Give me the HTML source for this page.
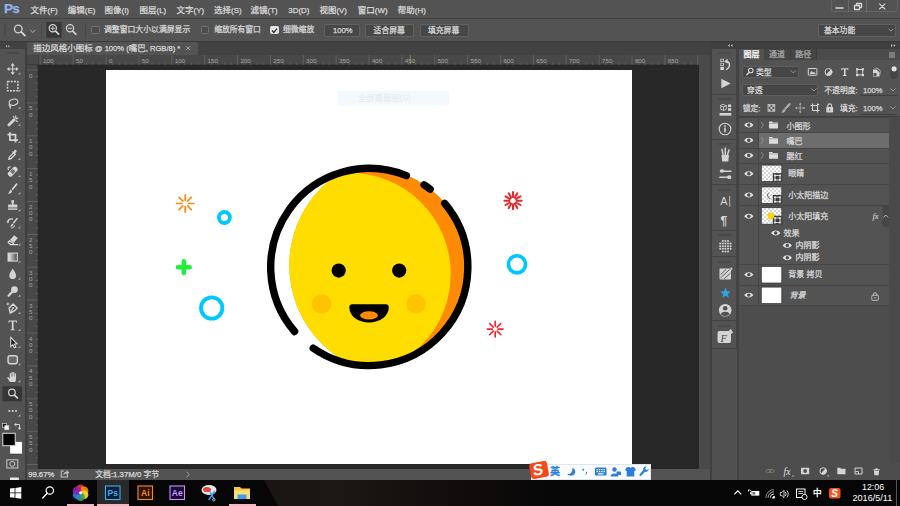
<!DOCTYPE html>
<html lang="zh-CN">
<head>
<meta charset="utf-8">
<title>描边风格小图标 @ 100% (嘴巴, RGB/8) *</title>
<style>
*{box-sizing:border-box;margin:0;padding:0}
html,body{width:900px;height:506px;overflow:hidden;background:#535353}
body{position:relative;font-family:"Liberation Sans","Noto Sans CJK SC",sans-serif;font-size:8px;color:#d9d9d9;line-height:1}
.abs{position:absolute}
.t{position:absolute;white-space:nowrap;line-height:12px;height:12px;font-size:8px;-webkit-text-stroke:0.250px currentColor}
.m{font-size:8.500px}
.l{font-size:.930em}
svg{position:absolute;overflow:visible}
.ic{fill:none;stroke:#d4d4d4;stroke-width:1.2;stroke-linecap:round;stroke-linejoin:round}
.icf{fill:#d4d4d4;stroke:none}
#menubar{left:0;top:0;width:900px;height:18px;background:#535353}
#menuline{left:0;top:18px;width:900px;height:1px;background:#404040}
#optbar{left:0;top:19px;width:900px;height:22px;background:#535353}
#optline{left:0;top:41px;width:900px;height:1px;background:#3a3a3a}
#tabbar{left:27px;top:42px;width:683px;height:13px;background:#424242}
#tab{left:27px;top:42px;width:171px;height:13px;background:#535353}
#tools{left:0;top:42px;width:26px;height:438px;background:#535353}
#toolsline{left:25px;top:42px;width:2px;height:438px;background:#3f3f3f}
#toolshead{left:0;top:42px;width:25px;height:7px;background:#424242}
#hruler{left:27px;top:55px;width:672.400px;height:10px;background:#484848}
#vruler{left:27px;top:65px;width:11px;height:403.800px;background:#484848}
#stage{left:38px;top:65px;width:661.400px;height:403.800px;background:#282828}
#doc{left:106px;top:70px;width:526px;height:394px;background:#fff}
#vscroll{left:699.400px;top:55px;width:10.600px;height:413.800px;background:#4a4a4a}
#status{left:27px;top:468.800px;width:683px;height:11.200px;background:#535353}
#rdiv{left:710px;top:42px;width:2px;height:438px;background:#404040}
#rhead{left:712px;top:42px;width:188px;height:7px;background:#3f3f3f}
#strip{left:712px;top:49px;width:24.300px;height:431px;background:#535353}
#stripline{left:736.300px;top:49px;width:2.450px;height:431px;background:#424242}
#panel{left:738.750px;top:49px;width:161.250px;height:431px;background:#4d4d4d}
#taskbar{left:0;top:480px;width:900px;height:26px;background:#060606}
.btn{position:absolute;background:#474747;border:1px solid #616161;border-radius:1px}
.cb{position:absolute;width:8.800px;height:8.800px;border:1px solid #727272;border-radius:1.500px;background:#4c4c4c}
.row{position:absolute;left:739px;width:150px;background:#535353;border-top:1px solid #454545}
.eyecol{position:absolute;left:758px;width:1px;background:#454545}
.thumb{position:absolute;left:761px;width:21px;height:17px;background:#fff;border:1px solid #3a3a3a}
.grip{position:absolute;left:718.200px;width:12.800px;height:2px;background:#494949}
.sep{position:absolute;left:712px;width:24.300px;height:1px;background:#424242}
</style>
</head>
<body>
<div id="menubar" class="abs"></div>
<div id="menuline" class="abs"></div>
<div id="optbar" class="abs"></div>
<div id="optline" class="abs"></div>
<div id="tabbar" class="abs"></div>
<div id="tab" class="abs"></div>
<div id="tools" class="abs"></div>
<div id="toolshead" class="abs"></div>
<div id="toolsline" class="abs"></div>
<div id="hruler" class="abs"></div>
<div id="vruler" class="abs"></div>
<div id="stage" class="abs"></div>
<div id="doc" class="abs"></div>
<svg id="art" class="abs" style="left:106px;top:70px" width="526" height="394" viewBox="106 70 526 394">
<defs>
<clipPath id="c0"><circle cx="369.3" cy="267" r="99.300"/></clipPath>
<clipPath id="c1"><circle cx="399.700" cy="265.500" r="110.400"/></clipPath>
</defs>
<rect x="337.300" y="91" width="111.600" height="14.500" fill="#f4f9fd"/>
<text x="358" y="101.200" font-size="8.300" fill="#e6e9eb" font-family="Liberation Sans, Noto Sans CJK SC, sans-serif">全屏幕截图(S)</text>
<g clip-path="url(#c0)"><g clip-path="url(#c1)">
<circle cx="369.3" cy="267" r="99.300" fill="#ff8a05"/>
<circle cx="349.600" cy="274" r="101.200" fill="#ffdd00"/>
</g></g>
<g fill="none" stroke="#000" stroke-width="7.400" stroke-linecap="round">
<path d="M294.6 331.5A98.7 98.7 0 0 1 406.4 175.6"/>
<path d="M424.1 184.9A98.7 98.7 0 0 1 430.1 189.2"/>
<path d="M444.7 203.3A98.7 98.7 0 0 1 313.3 348.2"/>
</g>
<circle cx="338.7" cy="270.6" r="7.100" fill="#000"/>
<circle cx="399.2" cy="270.6" r="7.100" fill="#000"/>
<circle cx="321.6" cy="303.9" r="9.800" fill="#ffc400"/>
<circle cx="416.1" cy="303.9" r="9.800" fill="#ffc400"/>
<path d="M352.300 304.200H385.800A3 3 0 0 1 388.800 307.200C388.800 316 380 322.400 369 322.400C358 322.400 349.300 316 349.300 307.200A3 3 0 0 1 352.300 304.200Z" fill="#000"/>
<ellipse cx="369" cy="315.400" rx="8.900" ry="4.100" fill="#ff8a05"/>
<path d="M188.4 203.5L193.8 203.5M187.5 205.8L191.3 209.6M185.2 206.7L185.2 212.1M182.9 205.8L179.1 209.6M182.0 203.5L176.6 203.5M182.9 201.2L179.1 197.4M185.2 200.3L185.2 194.9M187.5 201.2L191.3 197.4" stroke="#ff8a10" stroke-width="1.700" stroke-linecap="round" fill="none"/>
<circle cx="224.4" cy="217.5" r="5.500" fill="none" stroke="#00c8ff" stroke-width="3.800"/>
<path d="M177.900 267.200H189.700M183.800 261.300V273.100" stroke="#1ef03c" stroke-width="4.500" stroke-linecap="round" fill="none"/>
<circle cx="211.7" cy="308" r="10.650" fill="none" stroke="#00c8ff" stroke-width="3.900"/>
<path d="M516.6 200.7L521.6 200.7M516.1 202.5L520.4 205.0M514.8 203.8L517.3 208.1M513.0 204.3L513.0 209.3M511.2 203.8L508.7 208.1M509.9 202.5L505.6 205.0M509.4 200.7L504.4 200.7M509.900 198.900L505.6 196.4M511.2 197.6L508.7 193.3M513.0 197.1L513.0 192.1M514.8 197.6L517.3 193.3M516.1 198.900L520.4 196.4" stroke="#e8262a" stroke-width="2" stroke-linecap="round" fill="none"/>
<circle cx="517" cy="264.3" r="8.550" fill="none" stroke="#00c8ff" stroke-width="3.700"/>
<path d="M498.0 329.1L503.1 329.1M497.2 331.1L500.8 334.7M495.2 331.900L495.2 337.0M493.2 331.1L489.6 334.7M492.4 329.1L487.3 329.1M493.2 327.1L489.6 323.5M495.2 326.3L495.2 321.2M497.2 327.1L500.8 323.5" stroke="#ff1e28" stroke-width="1.600" stroke-linecap="round" fill="none"/>
</svg>

<div id="vscroll" class="abs"></div>
<div id="status" class="abs"></div>
<div id="rdiv" class="abs"></div>
<div id="rhead" class="abs"></div>
<div id="strip" class="abs"></div>
<div id="stripline" class="abs"></div>
<div id="panel" class="abs"></div>
<div id="taskbar" class="abs"></div>
<div class="t" style="left:4px;top:0px;height:18px;line-height:17px;font-size:13.500px;font-weight:bold;color:#8fb6e6;letter-spacing:-0.800px">Ps</div>
<div class="t m" style="left:30.6px;top:3.6999999999999993px;">文件<span class="l">(F)</span></div>
<div class="t m" style="left:67.8px;top:3.6999999999999993px;">编辑<span class="l">(E)</span></div>
<div class="t m" style="left:104.5px;top:3.6999999999999993px;">图像<span class="l">(I)</span></div>
<div class="t m" style="left:139.5px;top:3.6999999999999993px;">图层<span class="l">(L)</span></div>
<div class="t m" style="left:176.5px;top:3.6999999999999993px;">文字<span class="l">(Y)</span></div>
<div class="t m" style="left:214px;top:3.6999999999999993px;">选择<span class="l">(S)</span></div>
<div class="t m" style="left:250.6px;top:3.6999999999999993px;">滤镜<span class="l">(T)</span></div>
<div class="t m" style="left:288.3px;top:3.6999999999999993px;"><span class="l">3D(D)</span></div>
<div class="t m" style="left:319.4px;top:3.6999999999999993px;">视图<span class="l">(V)</span></div>
<div class="t m" style="left:357.8px;top:3.6999999999999993px;">窗口<span class="l">(W)</span></div>
<div class="t m" style="left:397.8px;top:3.6999999999999993px;">帮助<span class="l">(H)</span></div>
<div class="abs" style="left:831px;top:-1px;width:67px;height:13px;border:1px solid #646464;border-radius:0 0 2px 2px"></div>
<div class="abs" style="left:848px;top:0;width:1px;height:12px;background:#6a6a6a"></div>
<div class="abs" style="left:866px;top:0;width:1px;height:12px;background:#6a6a6a"></div>
<svg style="left:831px;top:0" width="67" height="12" viewBox="831 0 67 12"><g class="ic" style="stroke-width:1.3"><path d="M836 8H843" stroke-width="1.6"/><path d="M854.500 5.500H859.500V9.500H854.500ZM856.500 5.300V3.500H861.500V7.500H859.700"/><path d="M879.500 3.800L885 9M885 3.800L879.500 9" stroke-width="1.100"/></g></svg>
<svg style="left:0;top:19px" width="90" height="22" viewBox="0 19 90 22"><g class="ic" style="stroke-width:1.300"><circle cx="18.300" cy="29" r="3.800"/><path d="M21.200 31.900L24.800 35.500" stroke-width="1.800"/><path d="M30.500 30.200L32.800 32.400L35.100 30.200" stroke="#b0b0b0" stroke-width="1"/></g><rect x="46.300" y="22" width="15.400" height="15.700" fill="#383838"/><g class="ic" style="stroke-width:1.200"><circle cx="52.800" cy="28.300" r="3.600"/><path d="M55.600 31.100L58.600 34.100" stroke-width="1.700"/><path d="M51 28.300H54.600M52.800 26.500V30.100" stroke-width="0.900"/><circle cx="70" cy="28.300" r="3.600"/><path d="M72.800 31.100L75.800 34.100" stroke-width="1.700"/><path d="M68.200 28.300H71.800" stroke-width="0.900"/></g><path d="M5 23V38M41.500 23V38M85.500 23V38" stroke="#474747" stroke-width="1"/></svg>
<div class="cb" style="left:90.800px;top:25.600px"></div>
<div class="t" style="left:104px;top:24.2px;font-size:7.850px">调整窗口大小以满屏显示</div>
<div class="cb" style="left:200.600px;top:25.600px"></div>
<div class="t" style="left:214.2px;top:24.2px;font-size:7.750px">缩放所有窗口</div>
<div class="cb" style="left:270px;top:25.500px;background:#e4e4e4;border-color:#e4e4e4"></div>
<svg style="left:270px;top:25.500px" width="9" height="9" viewBox="0 0 9 9"><path d="M2 4.500L3.800 6.400L7 2.600" fill="none" stroke="#333" stroke-width="1.400"/></svg>
<div class="t" style="left:283px;top:24.2px;font-size:7.800px">细微缩放</div>
<div class="btn" style="left:324px;top:24px;width:36px;height:12.500px"></div>
<div class="t" style="left:333px;top:25px;font-size:7.600px">100%</div>
<div class="btn" style="left:365px;top:24px;width:49px;height:12.500px"></div>
<div class="t" style="left:373.6px;top:25px;font-size:7.800px">适合屏幕</div>
<div class="btn" style="left:419.500px;top:24px;width:49px;height:12.500px"></div>
<div class="t" style="left:428px;top:25px;font-size:7.800px">填充屏幕</div>
<div class="btn" style="left:818px;top:23.500px;width:77.500px;height:13px"></div>
<div class="t" style="left:824px;top:25px;font-size:7.800px">基本功能</div>
<svg style="left:886px;top:26px" width="10" height="8" viewBox="0 0 10 8"><path d="M3 3.200L5 5.200L7 3.200" class="ic" style="stroke-width:0.800;stroke:#a8a8a8"/></svg>
<div class="t m" style="left:33.2px;top:42.2px;">描边风格小图标<span style="font-size:.895em"> @ 100% (</span>嘴巴<span style="font-size:.895em">, RGB/8) *</span></div>
<svg style="left:185px;top:45px" width="6" height="6" viewBox="0 0 6 6"><path d="M1.600 1.600L4.800 4.800M4.800 1.600L1.600 4.800" class="ic" style="stroke-width:0.800;stroke:#bcbcbc"/></svg>
<svg style="left:5px;top:43.500px" width="8" height="5" viewBox="0 0 8 5"><path d="M1 1L2.400 2.300L1 3.600ZM3.300 1L4.700 2.300L3.300 3.600Z" fill="#c4c4c4"/></svg>
<div class="abs" style="left:7px;top:51.500px;width:12px;height:2px;background:#464646"></div>
<svg style="left:27px;top:54px" width="673" height="11" viewBox="27 54 673 11"><path d="M38.500 55V65" stroke="#3e3e3e" stroke-width="1"/><path d="M27 64.500H699" stroke="#3a3a3a" stroke-width="1"/><path d="M410.300 55V64" stroke="#9c8f3c" stroke-width="0.800"/><path d="M40.2 55V65M46.8 62.500V65M53.4 62.500V65M60.0 62.500V65M66.6 62.500V65M73.1 55V65M79.7 62.500V65M86.3 62.500V65M92.8 62.500V65M99.4 62.500V65M106.0 55V65M112.6 62.500V65M119.2 62.500V65M125.7 62.500V65M132.3 62.500V65M138.9 55V65M145.4 62.500V65M152.0 62.500V65M158.6 62.500V65M165.2 62.500V65M171.8 55V65M178.3 62.500V65M184.9 62.500V65M191.5 62.500V65M198.1 62.500V65M204.6 55V65M211.2 62.500V65M217.8 62.500V65M224.3 62.500V65M230.9 62.500V65M237.5 55V65M244.1 62.500V65M250.7 62.500V65M257.2 62.500V65M263.8 62.500V65M270.4 55V65M276.9 62.500V65M283.5 62.500V65M290.1 62.500V65M296.7 62.500V65M303.2 55V65M309.8 62.500V65M316.4 62.500V65M323.0 62.500V65M329.5 62.500V65M336.1 55V65M342.7 62.500V65M349.3 62.500V65M355.9 62.500V65M362.4 62.500V65M369.0 55V65M375.6 62.500V65M382.1 62.500V65M388.7 62.500V65M395.3 62.500V65M401.9 55V65M408.4 62.500V65M415.0 62.500V65M421.6 62.500V65M428.2 62.500V65M434.8 55V65M441.3 62.500V65M447.9 62.500V65M454.5 62.500V65M461.1 62.500V65M467.6 55V65M474.2 62.500V65M480.8 62.500V65M487.3 62.500V65M493.9 62.500V65M500.5 55V65M507.1 62.500V65M513.6 62.500V65M520.2 62.500V65M526.8 62.500V65M533.4 55V65M540.0 62.500V65M546.5 62.500V65M553.1 62.500V65M559.7 62.500V65M566.2 55V65M572.8 62.500V65M579.4 62.500V65M586.0 62.500V65M592.5 62.500V65M599.1 55V65M605.7 62.500V65M612.3 62.500V65M618.9 62.500V65M625.4 62.500V65M632.0 55V65M638.6 62.500V65M645.1 62.500V65M651.7 62.500V65M658.3 62.500V65M664.9 55V65M671.4 62.500V65M678.0 62.500V65M684.6 62.500V65M691.2 62.500V65M697.8 55V65" stroke="#6c6c6c" stroke-width="0.700"/><text x="43.1" y="63" font-size="6.200" fill="#a6a6a6" font-family="Liberation Sans, sans-serif">100</text><text x="76.0" y="63" font-size="6.200" fill="#a6a6a6" font-family="Liberation Sans, sans-serif">50</text><text x="108.9" y="63" font-size="6.200" fill="#a6a6a6" font-family="Liberation Sans, sans-serif">0</text><text x="141.8" y="63" font-size="6.200" fill="#a6a6a6" font-family="Liberation Sans, sans-serif">50</text><text x="174.7" y="63" font-size="6.200" fill="#a6a6a6" font-family="Liberation Sans, sans-serif">100</text><text x="207.5" y="63" font-size="6.200" fill="#a6a6a6" font-family="Liberation Sans, sans-serif">150</text><text x="240.4" y="63" font-size="6.200" fill="#a6a6a6" font-family="Liberation Sans, sans-serif">200</text><text x="273.3" y="63" font-size="6.200" fill="#a6a6a6" font-family="Liberation Sans, sans-serif">250</text><text x="306.1" y="63" font-size="6.200" fill="#a6a6a6" font-family="Liberation Sans, sans-serif">300</text><text x="339.0" y="63" font-size="6.200" fill="#a6a6a6" font-family="Liberation Sans, sans-serif">350</text><text x="371.9" y="63" font-size="6.200" fill="#a6a6a6" font-family="Liberation Sans, sans-serif">400</text><text x="404.8" y="63" font-size="6.200" fill="#a6a6a6" font-family="Liberation Sans, sans-serif">450</text><text x="437.6" y="63" font-size="6.200" fill="#a6a6a6" font-family="Liberation Sans, sans-serif">500</text><text x="470.5" y="63" font-size="6.200" fill="#a6a6a6" font-family="Liberation Sans, sans-serif">550</text><text x="503.4" y="63" font-size="6.200" fill="#a6a6a6" font-family="Liberation Sans, sans-serif">600</text><text x="536.3" y="63" font-size="6.200" fill="#a6a6a6" font-family="Liberation Sans, sans-serif">650</text><text x="569.1" y="63" font-size="6.200" fill="#a6a6a6" font-family="Liberation Sans, sans-serif">700</text><text x="602.0" y="63" font-size="6.200" fill="#a6a6a6" font-family="Liberation Sans, sans-serif">750</text><text x="634.9" y="63" font-size="6.200" fill="#a6a6a6" font-family="Liberation Sans, sans-serif">800</text><text x="667.8" y="63" font-size="6.200" fill="#a6a6a6" font-family="Liberation Sans, sans-serif">850</text></svg>
<svg style="left:27px;top:65px" width="11" height="403" viewBox="27 65 11 403"><path d="M37.500 65V468" stroke="#3a3a3a" stroke-width="1"/><path d="M27 70.0H38M35.500 76.6H38M35.500 83.2H38M35.500 89.7H38M35.500 96.3H38M27 102.9H38M35.500 109.4H38M35.500 116.0H38M35.500 122.6H38M35.500 129.2H38M27 135.8H38M35.500 142.3H38M35.500 148.9H38M35.500 155.5H38M35.500 162.1H38M27 168.6H38M35.500 175.2H38M35.500 181.8H38M35.500 188.3H38M35.500 194.9H38M27 201.5H38M35.500 208.1H38M35.500 214.7H38M35.500 221.2H38M35.500 227.8H38M27 234.4H38M35.500 240.9H38M35.500 247.5H38M35.500 254.1H38M35.500 260.7H38M27 267.2H38M35.500 273.8H38M35.500 280.4H38M35.500 287.0H38M35.500 293.5H38M27 300.1H38M35.500 306.7H38M35.500 313.3H38M35.500 319.9H38M35.500 326.4H38M27 333.0H38M35.500 339.6H38M35.500 346.1H38M35.500 352.7H38M35.500 359.3H38M27 365.9H38M35.500 372.4H38M35.500 379.0H38M35.500 385.6H38M35.500 392.2H38M27 398.8H38M35.500 405.3H38M35.500 411.9H38M35.500 418.5H38M35.500 425.1H38M27 431.6H38M35.500 438.2H38M35.500 444.8H38M35.500 451.3H38M35.500 457.9H38M27 464.5H38" stroke="#6c6c6c" stroke-width="0.700"/><text x="29" y="77.5" font-size="6.200" fill="#a6a6a6" font-family="Liberation Sans, sans-serif">0</text><text x="29" y="110.4" font-size="6.200" fill="#a6a6a6" font-family="Liberation Sans, sans-serif">5</text><text x="29" y="116.6" font-size="6.200" fill="#a6a6a6" font-family="Liberation Sans, sans-serif">0</text><text x="29" y="143.2" font-size="6.200" fill="#a6a6a6" font-family="Liberation Sans, sans-serif">1</text><text x="29" y="149.4" font-size="6.200" fill="#a6a6a6" font-family="Liberation Sans, sans-serif">0</text><text x="29" y="155.7" font-size="6.200" fill="#a6a6a6" font-family="Liberation Sans, sans-serif">0</text><text x="29" y="176.1" font-size="6.200" fill="#a6a6a6" font-family="Liberation Sans, sans-serif">1</text><text x="29" y="182.3" font-size="6.200" fill="#a6a6a6" font-family="Liberation Sans, sans-serif">5</text><text x="29" y="188.5" font-size="6.200" fill="#a6a6a6" font-family="Liberation Sans, sans-serif">0</text><text x="29" y="209.0" font-size="6.200" fill="#a6a6a6" font-family="Liberation Sans, sans-serif">2</text><text x="29" y="215.2" font-size="6.200" fill="#a6a6a6" font-family="Liberation Sans, sans-serif">0</text><text x="29" y="221.4" font-size="6.200" fill="#a6a6a6" font-family="Liberation Sans, sans-serif">0</text><text x="29" y="241.9" font-size="6.200" fill="#a6a6a6" font-family="Liberation Sans, sans-serif">2</text><text x="29" y="248.1" font-size="6.200" fill="#a6a6a6" font-family="Liberation Sans, sans-serif">5</text><text x="29" y="254.3" font-size="6.200" fill="#a6a6a6" font-family="Liberation Sans, sans-serif">0</text><text x="29" y="274.8" font-size="6.200" fill="#a6a6a6" font-family="Liberation Sans, sans-serif">3</text><text x="29" y="280.9" font-size="6.200" fill="#a6a6a6" font-family="Liberation Sans, sans-serif">0</text><text x="29" y="287.1" font-size="6.200" fill="#a6a6a6" font-family="Liberation Sans, sans-serif">0</text><text x="29" y="307.6" font-size="6.200" fill="#a6a6a6" font-family="Liberation Sans, sans-serif">3</text><text x="29" y="313.8" font-size="6.200" fill="#a6a6a6" font-family="Liberation Sans, sans-serif">5</text><text x="29" y="320.0" font-size="6.200" fill="#a6a6a6" font-family="Liberation Sans, sans-serif">0</text><text x="29" y="340.5" font-size="6.200" fill="#a6a6a6" font-family="Liberation Sans, sans-serif">4</text><text x="29" y="346.7" font-size="6.200" fill="#a6a6a6" font-family="Liberation Sans, sans-serif">0</text><text x="29" y="352.9" font-size="6.200" fill="#a6a6a6" font-family="Liberation Sans, sans-serif">0</text><text x="29" y="373.4" font-size="6.200" fill="#a6a6a6" font-family="Liberation Sans, sans-serif">4</text><text x="29" y="379.6" font-size="6.200" fill="#a6a6a6" font-family="Liberation Sans, sans-serif">5</text><text x="29" y="385.8" font-size="6.200" fill="#a6a6a6" font-family="Liberation Sans, sans-serif">0</text><text x="29" y="406.2" font-size="6.200" fill="#a6a6a6" font-family="Liberation Sans, sans-serif">5</text><text x="29" y="412.4" font-size="6.200" fill="#a6a6a6" font-family="Liberation Sans, sans-serif">0</text><text x="29" y="418.6" font-size="6.200" fill="#a6a6a6" font-family="Liberation Sans, sans-serif">0</text><text x="29" y="439.1" font-size="6.200" fill="#a6a6a6" font-family="Liberation Sans, sans-serif">5</text><text x="29" y="445.3" font-size="6.200" fill="#a6a6a6" font-family="Liberation Sans, sans-serif">5</text><text x="29" y="451.5" font-size="6.200" fill="#a6a6a6" font-family="Liberation Sans, sans-serif">0</text></svg>
<div class="t" style="left:28.2px;top:469.3px;font-size:7.700px">99.67%</div>
<svg style="left:60px;top:469.200px" width="10" height="9" viewBox="0 0 10 9"><path d="M3.500 2H1.200V8H7.500V6" class="ic" style="stroke-width:1.100;stroke:#c4c4c4"/><path d="M3.300 6C3.600 3.800 5 2.800 6.500 2.800V1L9.300 3.600L6.500 6.200V4.400C5.200 4.400 4.200 4.900 3.300 6Z" fill="#c4c4c4"/></svg>
<div class="t" style="left:95.3px;top:469.3px;font-size:7.800px">文档:1.37M/0 字节</div>
<svg style="left:185px;top:470.800px" width="6" height="7" viewBox="0 0 6 7"><path d="M1.800 1L4.200 3.500L1.800 6" class="ic" style="stroke-width:0.900;stroke:#a8a8a8"/></svg>
<svg style="left:0;top:42px" width="26" height="438" viewBox="0 42 26 438">
<rect x="2.500" y="386.300" width="19.500" height="15" fill="#363636"/>
<g transform="translate(12.700 69.0) scale(0.800) translate(-12 0)"><path class="ic" d="M12 -4.500V4.500M7.500 0H16.500" style="stroke-width:1.350"/><path class="icf" d="M12 -7.400L14.600 -4H9.400ZM12 7.400L14.600 4H9.400ZM4.600 0L8 -2.600V2.600ZM19.400 0L16 -2.600V2.600Z"/></g><path d="M20.300 74.5V72.3L18.100 74.5Z" fill="#b4b4b4"/>
<g transform="translate(12.700 86.1) scale(0.800) translate(-12 0)"><rect class="ic" x="5.500" y="-5.800" width="13" height="11.600" style="stroke-width:1.800;stroke-dasharray:2.600 1.400;stroke-linecap:butt"/></g><path d="M20.300 91.6V89.4L18.100 91.6Z" fill="#b4b4b4"/>
<g transform="translate(12.700 103.2) scale(0.800) translate(-12 0)"><ellipse class="ic" cx="13" cy="-1.200" rx="5.600" ry="3.800" transform="rotate(-12 13 -1.200)"/><path class="ic" d="M8.300 1.200C7 2.400 7.600 4 9.300 3.600C8.600 4.800 8.600 5.600 9 6.300" style="stroke-width:1.500"/></g><path d="M20.300 108.7V106.5L18.100 108.7Z" fill="#b4b4b4"/>
<g transform="translate(12.700 120.3) scale(0.800) translate(-12 0)"><path class="ic" d="M7.200 5.800L13.800 -0.800" style="stroke-width:3.450"/><path class="ic" d="M15.800 -5.500V-3M18.300 -2.800L16.800 -1.800M17.800 1.500L16.200 0.500M12.800 -4.800L13.800 -3.200" style="stroke-width:1.500"/></g><path d="M20.300 125.8V123.6L18.100 125.8Z" fill="#b4b4b4"/>
<g transform="translate(12.700 137.4) scale(0.800) translate(-12 0)"><path class="ic" d="M8.500 -6.500V3.500H18.500M5.500 -3.500H15.500V6.500" style="stroke-width:2.250;stroke-linecap:butt"/></g><path d="M20.300 142.9V140.7L18.100 142.9Z" fill="#b4b4b4"/>
<g transform="translate(12.700 154.5) scale(0.800) translate(-12 0)"><path class="ic" d="M7 6L8 3L13 -2L15 0L10 5Z" style="stroke-width:1.650"/><path class="icf" d="M12.600 -3.200L14.400 -5.600C15.400 -6.800 17.800 -4.800 16.800 -3.400L15 -1.200L16 -0.200L15 0.800L11.200 -3L12.200 -4Z"/></g><path d="M20.300 160.0V157.8L18.100 160.0Z" fill="#b4b4b4"/>
<g transform="translate(12.700 171.6) scale(0.800) translate(-12 0)"><g transform="rotate(-45 12 0)"><rect class="icf" x="5" y="-3.200" width="14" height="6.400" rx="2.200"/><rect x="9.800" y="-2.200" width="4.400" height="4.400" fill="#535353"/><circle class="icf" cx="11" cy="-1" r="0.500"/><circle class="icf" cx="13" cy="-1" r="0.500"/><circle class="icf" cx="11" cy="1" r="0.500"/><circle class="icf" cx="13" cy="1" r="0.500"/></g><path class="ic" d="M6.500 -2.500C5.500 -5 7.500 -6.500 9.500 -5.500" style="stroke-width:1.500;stroke-dasharray:1 1"/></g><path d="M20.300 177.1V174.9L18.100 177.1Z" fill="#b4b4b4"/>
<g transform="translate(12.700 188.7) scale(0.800) translate(-12 0)"><path class="icf" d="M17.300 -6.800C18.300 -6.200 18 -5.200 17.400 -4.500L12 2L10.300 0.600L15.800 -6.200C16.300 -6.800 16.800 -7.100 17.300 -6.800Z"/><path class="icf" d="M9.600 1.400L11.300 2.900C11 5.200 8.600 6.800 6.200 6.200C7.800 5.200 7.600 2.400 9.600 1.400Z"/></g><path d="M20.300 194.2V192.0L18.100 194.2Z" fill="#b4b4b4"/>
<g transform="translate(12.700 205.8) scale(0.800) translate(-12 0)"><path class="icf" d="M10.200 -6C10.200 -7.800 13.800 -7.800 13.800 -6C13.800 -4.500 13 -3.500 13 -1.500H16.500C17.600 -1.500 17.800 -0.800 17.800 0V2H6.200V0C6.200 -0.800 6.400 -1.500 7.500 -1.500H11C11 -3.500 10.200 -4.500 10.200 -6Z"/><rect class="icf" x="6.200" y="3.200" width="11.600" height="1.800"/></g><path d="M20.300 211.3V209.1L18.100 211.3Z" fill="#b4b4b4"/>
<g transform="translate(12.700 222.9) scale(0.800) translate(-12 0)"><path class="icf" d="M17.800 -6.500C18.600 -6 18.400 -5.200 17.900 -4.500L13.500 1L12.100 -0.100L16.600 -5.900C17 -6.400 17.400 -6.700 17.800 -6.500Z"/><path class="icf" d="M11.500 0.600L12.900 1.800C12.700 3.800 10.700 5 8.700 4.600C10 3.700 9.900 1.400 11.500 0.600Z"/><path class="ic" d="M6 -1C6 -4.200 9 -5.800 11.600 -4.600" style="stroke-width:1.650"/><path class="icf" d="M4.300 -2L7.700 -2L6 0.600Z"/><path class="ic" d="M14.500 3.500C14 5.200 12.500 6.300 10.500 6.300" style="stroke-width:1.500;stroke:#aaa"/></g><path d="M20.300 228.4V226.2L18.100 228.4Z" fill="#b4b4b4"/>
<g transform="translate(12.700 240.0) scale(0.800) translate(-12 0)"><path class="icf" d="M13.800 -6L18.400 -2.400L13.400 3.500L8.600 0Z"/><path class="ic" d="M8 0.800L6.200 3L9.600 5.600H12.400L13 4.300Z" style="stroke-width:1.500"/><path class="ic" d="M9 5.800H18" style="stroke-width:1.500"/></g><path d="M20.300 245.5V243.3L18.100 245.5Z" fill="#b4b4b4"/>
<g transform="translate(12.700 257.1) scale(0.800) translate(-12 0)"><defs><linearGradient id="gr" x1="0" x2="1"><stop offset="0" stop-color="#eee"/><stop offset="1" stop-color="#4a4a4a"/></linearGradient></defs><rect x="6.200" y="-5" width="11.600" height="10" fill="url(#gr)" stroke="#d4d4d4" stroke-width="1.350"/></g><path d="M20.300 262.6V260.4L18.100 262.6Z" fill="#b4b4b4"/>
<g transform="translate(12.700 274.2) scale(0.800) translate(-12 0)"><path class="icf" d="M12 -7C13.500 -3.800 16.300 -1.200 16.300 1.800C16.300 4.400 14.400 6 12 6C9.600 6 7.700 4.400 7.700 1.800C7.700 -1.200 10.500 -3.800 12 -7Z"/></g><path d="M20.300 279.7V277.5L18.100 279.7Z" fill="#b4b4b4"/>
<g transform="translate(12.700 291.3) scale(0.800) translate(-12 0)"><circle class="icf" cx="14.200" cy="-2.200" r="4.200"/><path class="ic" d="M11.200 0.800L6.800 5.600" style="stroke-width:2.700"/></g><path d="M20.300 296.8V294.6L18.100 296.8Z" fill="#b4b4b4"/>
<g transform="translate(12.700 308.4) scale(0.800) translate(-12 0)"><path class="ic" d="M9 6L7.500 -0.500L12.500 -5.500L17.500 -0.500L15 2.500Z" style="stroke-width:1.800"/><path class="ic" d="M9.200 5.600L12.200 -0.200" style="stroke-width:1.350"/><circle class="icf" cx="12.400" cy="-0.600" r="1.100"/><path class="ic" d="M6 -6.800V-4.200M4.700 -5.500H7.300" style="stroke-width:1.200"/></g><path d="M20.300 313.9V311.7L18.100 313.9Z" fill="#b4b4b4"/>
<g transform="translate(12.700 325.5) scale(0.800) translate(-12 0)"><path class="icf" d="M6.800 -6.200H17.200V-3.400H16.300C16.100 -4.500 15.700 -4.900 14.600 -4.900H13.100V3.800C13.100 4.700 13.400 4.900 14.600 5V5.800H9.400V5C10.600 4.900 10.900 4.700 10.900 3.800V-4.900H9.400C8.300 -4.900 7.900 -4.500 7.700 -3.400H6.800Z"/></g><path d="M20.300 331.0V328.8L18.100 331.0Z" fill="#b4b4b4"/>
<g transform="translate(12.700 342.6) scale(0.800) translate(-12 0)"><path d="M9.500 -6.500L9.500 5L12.200 2.600L14 6.600L16 5.700L14.200 1.800L17.500 1.500Z" fill="#222" stroke="#d4d4d4" stroke-width="1.350"/></g><path d="M20.300 348.1V345.9L18.100 348.1Z" fill="#b4b4b4"/>
<g transform="translate(12.700 359.7) scale(0.800) translate(-12 0)"><rect x="6.200" y="-5" width="11.600" height="10" rx="2.600" fill="#6a6a6a" stroke="#d4d4d4" stroke-width="1.800"/></g><path d="M20.300 365.2V363.0L18.100 365.2Z" fill="#b4b4b4"/>
<g transform="translate(12.700 376.8) scale(0.800) translate(-12 0)"><path class="icf" d="M8.500 6.500C7.500 4.500 5.800 2.800 5.300 1.500C5 0.500 6.200 0 7 0.800L8.300 2.200V-4C8.300 -5.200 9.900 -5.200 9.900 -4V-0.500H10.400V-5.500C10.400 -6.700 12 -6.700 12 -5.500V-0.500H12.500V-5C12.500 -6.200 14.100 -6.200 14.100 -5V-0.500H14.600V-3.500C14.600 -4.700 16.200 -4.700 16.200 -3.500V2.500C16.200 4.500 15.500 5.500 15.200 6.500Z"/></g><path d="M20.300 382.3V380.1L18.100 382.3Z" fill="#b4b4b4"/>
<g transform="translate(12.700 393.9) scale(0.800) translate(-12 0)"><circle class="ic" cx="11" cy="-1.800" r="4.200" style="stroke-width:1.420"/><path class="ic" d="M14.200 1.400L17.800 5" style="stroke-width:2.250"/></g>
<g transform="translate(12.700 411.0) scale(0.800) translate(-12 0)"><circle class="icf" cx="7.800" cy="0" r="1.300"/><circle class="icf" cx="12" cy="0" r="1.300"/><circle class="icf" cx="16.200" cy="0" r="1.300"/></g><path d="M20.300 416.5V414.3L18.100 416.5Z" fill="#b4b4b4"/>
<rect x="2.600" y="423.500" width="4" height="4" fill="#111" stroke="#d4d4d4" stroke-width="0.700"/><rect x="4.800" y="425.700" width="4" height="4" fill="#fff" stroke="#d4d4d4" stroke-width="0.700"/>
<path class="ic" d="M15.500 424.500H19.500V428.500" style="stroke-width:1"/><path class="icf" d="M14 424.500L16.200 422.800V426.200ZM19.500 430L17.800 427.800H21.200Z"/>
<rect x="9.800" y="441.500" width="12.500" height="12.500" fill="#fff" stroke="#3a3a3a" stroke-width="0.600"/>
<rect x="2.800" y="433.300" width="12.400" height="12.400" fill="#000" stroke="#dcdcdc" stroke-width="1"/>
<rect x="6.800" y="459.800" width="11" height="8.200" fill="none" stroke="#c8c8c8" stroke-width="1"/><circle cx="12.300" cy="463.900" r="2.500" fill="none" stroke="#c8c8c8" stroke-width="1"/>
<rect x="10" y="477.500" width="8.800" height="2.500" fill="#e8e8e8"/>
</svg>
<svg style="left:700px;top:42px" width="200" height="8" viewBox="700 42 200 8"><path d="M729.700 43.900L728 45.500L729.700 47.100ZM732.500 43.900L730.800 45.500L732.500 47.100Z" fill="#c4c4c4"/><path d="M891 43.900L892.700 45.500L891 47.100ZM893.800 43.900L895.500 45.500L893.800 47.100Z" fill="#c4c4c4"/></svg>
<div class="grip" style="top:52px"></div>
<div class="grip" style="top:98px"></div>
<div class="grip" style="top:143px"></div>
<div class="grip" style="top:189px"></div>
<div class="grip" style="top:234px"></div>
<div class="grip" style="top:261px"></div>
<div class="grip" style="top:325px"></div>
<div class="sep" style="top:94px"></div>
<div class="sep" style="top:139px"></div>
<div class="sep" style="top:184px"></div>
<div class="sep" style="top:230px"></div>
<div class="sep" style="top:256px"></div>
<div class="sep" style="top:320px"></div>
<div class="sep" style="top:348px"></div>
<div class="abs" style="left:712px;top:349px;width:25px;height:131px;background:#505050"></div>
<svg style="left:712px;top:49px" width="25" height="300" viewBox="712 49 25 300">
<g class="icf"><rect x="720.400" y="58.800" width="3.500" height="3.200"/><rect x="720.400" y="62.800" width="3.500" height="3.200"/><rect x="720.400" y="66.800" width="3.500" height="3.200"/></g><rect x="721.100" y="59.500" width="2.100" height="1.800" fill="#535353" stroke="none"/><rect x="721.100" y="63.500" width="2.100" height="1.800" fill="#535353"/>
<path class="ic" d="M726.500 69.500C730.500 67.500 730.500 61.800 726.300 61.200" style="stroke-width:1.300"/><path class="icf" d="M724.300 61.500L727.600 58.800V63.800Z"/>
<path class="icf" d="M721.300 78.800L730.700 83.500L721.300 88.200Z"/>
<path class="ic" d="M723.500 104.500L726.300 105.700V109.300L723.500 110.500L720.700 109.300V105.700ZM720.700 105.700L723.500 107L726.300 105.700M723.500 107V110.500" style="stroke-width:0.800"/><rect class="icf" x="728" y="104.500" width="3.200" height="2.600"/><rect class="icf" x="728" y="108.200" width="3.200" height="2.600"/><rect class="icf" x="719.500" y="113" width="11.800" height="2.600"/>
<circle class="ic" cx="725" cy="129" r="5.800" style="stroke-width:1.100"/><path class="icf" d="M724.200 127.500H725.800V132.300H724.200ZM724.200 125.300H725.800V126.700H724.200Z"/>
<path class="icf" d="M721.500 155H729L728.300 161.500H722.200Z"/><path class="ic" d="M723 154.500L722 149.500M725.300 154.500V148M727.500 154.500L729 150" style="stroke-width:1.500"/>
<path class="ic" d="M721 171.300H731M719.800 177.200H728" style="stroke-width:1.400"/><ellipse class="icf" cx="722" cy="171" rx="2.300" ry="1.700"/><path class="icf" d="M727 177.200C727 175 731.300 174.300 731.300 177.200C731.300 180.100 727 179.400 727 177.200Z"/>
<text x="720.300" y="205.300" font-size="10.800" fill="#d8d8d8" font-family="Liberation Sans, sans-serif">A</text><path class="ic" d="M729.700 196.300V206.500" style="stroke-width:0.800"/>
<text x="720.500" y="224.500" font-size="12" font-weight="bold" fill="#d8d8d8" font-family="Liberation Sans, sans-serif">¶</text>
<g class="icf"><circle cx="720.2" cy="243.6" r="1"/><circle cx="720.2" cy="246.2" r="1"/><circle cx="720.2" cy="248.8" r="1"/><circle cx="722.8" cy="241.0" r="1"/><circle cx="722.8" cy="243.6" r="1"/><circle cx="722.8" cy="246.2" r="1"/><circle cx="722.8" cy="248.8" r="1"/><circle cx="722.8" cy="251.4" r="1"/><circle cx="725.4" cy="241.0" r="1"/><circle cx="725.4" cy="243.6" r="1"/><circle cx="725.4" cy="246.2" r="1"/><circle cx="725.4" cy="248.8" r="1"/><circle cx="725.4" cy="251.4" r="1"/><circle cx="728.0" cy="241.0" r="1"/><circle cx="728.0" cy="243.6" r="1"/><circle cx="728.0" cy="246.2" r="1"/><circle cx="728.0" cy="248.8" r="1"/><circle cx="728.0" cy="251.4" r="1"/><circle cx="730.6" cy="243.6" r="1"/><circle cx="730.6" cy="246.2" r="1"/><circle cx="730.6" cy="248.8" r="1"/></g>
<rect class="icf" x="719.500" y="268.500" width="11.500" height="11" rx="1"/><path d="M720.500 278L729.500 269.500M720.500 274.500L726 269.500M724 279L730.500 273" stroke="#535353" stroke-width="0.900" fill="none"/><path class="icf" d="M730.500 267.500C732.500 267 733 269.500 731.500 270.500Z"/>
<path d="M725.5 287.6L727.0 291.2L730.8 291.5L727.9 294.0L728.8 297.7L725.5 295.7L722.2 297.7L723.1 294.0L720.2 291.5L724.0 291.2Z" fill="#2fa4dc"/>
<circle class="icf" cx="725.200" cy="310.300" r="6.300"/><circle cx="725.200" cy="308.300" r="2.300" fill="#535353"/><path d="M720.800 314.200C721.800 311 728.600 311 729.600 314.200C727.500 316.600 723 316.600 720.800 314.200Z" fill="#535353"/>
<rect class="icf" x="717.500" y="331" width="13.500" height="12" rx="2"/><path class="icf" d="M729 330L731 329.300L733 332.500L731.500 334Z"/><text x="720.500" y="341.500" font-size="10.500" font-style="italic" fill="#444" font-family="Liberation Serif, serif">F</text>
</svg>
<div class="abs" style="left:739px;top:49px;width:161px;height:11px;background:#4b4b4b"></div>
<div class="abs" style="left:764px;top:49px;width:52.500px;height:11px;background:#454545"></div>
<div class="abs" style="left:739px;top:49px;width:25px;height:12px;background:#535353"></div>
<div class="abs" style="left:790px;top:49px;width:1px;height:11px;background:#3d3d3d"></div>
<div class="abs" style="left:816px;top:49px;width:1px;height:11px;background:#3d3d3d"></div>
<div class="abs" style="left:739px;top:60px;width:161px;height:57px;background:#535353"></div>
<div class="t" style="left:743.5px;top:48.8px;color:#f0f0f0;font-weight:bold">图层</div>
<div class="t" style="left:769px;top:48.8px;color:#a8a8a8">通道</div>
<div class="t" style="left:795.3px;top:48.8px;color:#a8a8a8">路径</div>
<div class="abs" style="left:888.700px;top:52.300px;width:6.800px;height:5.600px;background:#7c7c7c"></div>
<div class="btn" style="left:741.500px;top:65.500px;width:57px;height:12.800px;background:#464646;border-color:#5e5e5e"></div>
<div class="btn" style="left:741.500px;top:83.500px;width:76.500px;height:12.800px;background:#464646;border-color:#5e5e5e"></div>
<svg style="left:739px;top:60px" width="161" height="60" viewBox="739 60 161 60">
<circle class="ic" cx="750.800" cy="70.500" r="2.300" style="stroke-width:1.100"/><path class="ic" d="M749.200 72.300L746.800 74.800" style="stroke-width:1.300"/>
<path class="ic" d="M791 70.700L793.300 73L795.600 70.700" style="stroke-width:0.800;stroke:#a8a8a8"/>
<rect class="ic" x="808.300" y="68.500" width="8.600" height="6.800" rx="0.800" style="stroke-width:1"/><path class="icf" d="M809.500 74L811.500 71L813 72.800L814 71.800L815.800 74Z"/>
<circle class="ic" cx="828.500" cy="72" r="3.500" style="stroke-width:1"/><path class="icf" d="M826 74.500A3.500 3.500 0 0 0 831 69.500Z"/><path class="icf" d="M828.500 68.500A3.500 3.500 0 0 0 828.500 75.500Z" opacity="0"/>
<path class="icf" d="M841.300 68.300H848.300V70.300H847.700C847.500 69.500 847.200 69.300 846.500 69.300H845.600V74.600C845.600 75.100 845.800 75.200 846.600 75.300V75.900H843V75.300C843.800 75.200 844 75.100 844 74.600V69.300H843.100C842.400 69.300 842.100 69.500 841.900 70.300H841.300Z"/>
<rect class="ic" x="857.300" y="69.500" width="5.400" height="5.400" style="stroke-width:1"/><g class="icf"><rect x="856" y="68.200" width="2.200" height="2.200"/><rect x="861.800" y="68.200" width="2.200" height="2.200"/><rect x="856" y="74" width="2.200" height="2.200"/><rect x="861.800" y="74" width="2.200" height="2.200"/></g>
<path class="icf" d="M873 69.500H876.500L879.500 72.500V76.500H873Z"/><path class="icf" d="M874.500 67.800H877.500L880.500 70.500V74.500H880V71L877 68.500H874.500Z" opacity="0.800"/><rect x="873.500" y="73" width="3" height="3" fill="#535353"/>
<rect x="891" y="66.300" width="6.200" height="12" rx="3.100" fill="#464646" stroke="#3c3c3c" stroke-width="0.600"/><circle cx="894.100" cy="68.800" r="2.600" fill="#e4e4e4"/>
<path class="ic" d="M811.600 88.700L813.900 91L816.200 88.700" style="stroke-width:0.800;stroke:#a8a8a8"/>
<path class="ic" d="M890.700 88.700L893 91L895.300 88.700" style="stroke-width:0.800;stroke:#a8a8a8"/>
<path class="ic" d="M890.700 106.700L893 109L895.300 106.700" style="stroke-width:0.800;stroke:#a8a8a8"/>
<path d="M860.500 95.500H897M860.500 114.500H897" stroke="#3f3f3f" stroke-width="1"/>
<rect x="768" y="104.500" width="6.800" height="6.800" fill="none" stroke="#c8c8c8" stroke-width="0.800"/><g fill="#c8c8c8"><rect x="768.400" y="104.900" width="2" height="2"/><rect x="772.400" y="104.900" width="2" height="2"/><rect x="770.400" y="106.900" width="2" height="2"/><rect x="768.400" y="108.900" width="2" height="2"/><rect x="772.400" y="108.900" width="2" height="2"/></g>
<path d="M789.800 103.300C790.500 103.800 790.300 104.500 789.800 105L785.800 109.300L784.700 108.300L788.800 103.800C789.200 103.300 789.500 103.100 789.800 103.300ZM784.200 109L785.300 110C785.100 111.600 783.500 112.700 781.800 112.300C783 111.600 782.800 109.700 784.200 109Z" fill="#b0b0b0" stroke="#b0b0b0" stroke-width="0.800"/>
<path class="ic" d="M800.200 104.500V111.500M796.700 108H803.700" style="stroke-width:0.700;stroke:#b4b4b4"/><path d="M800.200 102.800L801.500 104.600H798.900ZM800.200 113.200L801.500 111.400H798.900ZM795 108L796.800 106.700V109.300ZM805.400 108L803.600 106.700V109.300Z" fill="#bdbdbd"/>
<path class="ic" d="M812.500 103.500V110.500H819.500M810.500 105.500H817.500V112.500" style="stroke-width:1.100;stroke-linecap:butt"/><path class="icf" d="M817 103.300L819.800 104.500L817 105.700Z"/>
<rect class="icf" x="826.300" y="107" width="6.800" height="5.400" rx="0.600"/><path class="ic" d="M827.800 107V105.600C827.800 103.300 831.600 103.300 831.600 105.600V107" style="stroke-width:1.100"/><rect x="829.200" y="108.800" width="1" height="1.800" fill="#535353"/>
</svg>
<div class="t" style="left:756px;top:66.7px;font-size:7.800px">类型</div>
<div class="t" style="left:747px;top:84.5px;font-size:7.800px">穿透</div>
<div class="t" style="left:824.3px;top:84.5px;font-size:7.800px">不透明度:</div>
<div class="t" style="left:863px;top:84.5px;font-size:7.600px">100%</div>
<div class="t" style="left:742.7px;top:102.9px;font-size:7.800px">锁定:</div>
<div class="t" style="left:840px;top:102.9px;font-size:7.800px">填充:</div>
<div class="t" style="left:863px;top:102.9px;font-size:7.600px">100%</div>
<div class="abs" style="left:739px;top:116px;width:161px;height:1px;background:#404040"></div>
<div class="abs" style="left:889px;top:117px;width:11px;height:346px;background:#4a4a4a"></div>
<div class="abs" style="left:739px;top:463px;width:161px;height:17px;background:#4d4d4d"></div>
<div class="row" style="top:117px;height:15.4px;background:#535353"></div>
<div class="row" style="top:132.4px;height:15.2px;background:#6d6d6d"></div>
<div class="row" style="top:147.6px;height:15px;background:#535353"></div>
<div class="row" style="top:162.6px;height:21.8px;background:#535353"></div>
<div class="row" style="top:184.4px;height:20.6px;background:#535353"></div>
<div class="row" style="top:205px;height:59px;background:#535353"></div>
<div class="row" style="top:264px;height:20.6px;background:#535353"></div>
<div class="row" style="top:284.6px;height:20.4px;background:#535353"></div>
<div class="abs" style="left:739px;top:305px;width:150px;height:1px;background:#454545"></div>
<div class="abs" style="left:739px;top:132.400px;width:20px;height:15.200px;background:#535353;border-top:1px solid #454545"></div>
<div class="eyecol" style="top:117px;height:188px"></div>
<svg style="left:739px;top:117px" width="161" height="190" viewBox="739 117 161 190"><defs><pattern id="chk" width="4" height="4" patternUnits="userSpaceOnUse"><rect width="4" height="4" fill="#fff"/><rect width="2" height="2" fill="#d6d6d6"/><rect x="2" y="2" width="2" height="2" fill="#d6d6d6"/></pattern></defs>
<g transform="translate(748.8 125.0)"><path d="M-4.600 0C-2.600 -3.300 2.600 -3.300 4.600 0C2.600 3.300 -2.600 3.300 -4.600 0Z" fill="#e0e0e0"/><circle cx="0" cy="0" r="1.700" fill="#4c4c4c"/></g>
<path class="ic" d="M761.300 122.0L763.300 125.0L761.300 128.0" style="stroke-width:0.700;stroke:#a0a0a0"/>
<path d="M769 121.6H772.300L773 122.6H778V128.4H769Z" fill="#dcdcdc"/><path d="M769 123.5H778" stroke="#8a8a8a" stroke-width="0.600"/>
<g transform="translate(748.8 140.3)"><path d="M-4.600 0C-2.600 -3.300 2.600 -3.300 4.600 0C2.600 3.300 -2.600 3.300 -4.600 0Z" fill="#e0e0e0"/><circle cx="0" cy="0" r="1.700" fill="#4c4c4c"/></g>
<path class="ic" d="M761.300 137.3L763.300 140.3L761.300 143.3" style="stroke-width:0.700;stroke:#a0a0a0"/>
<path d="M769 136.9H772.300L773 137.9H778V143.7H769Z" fill="#dcdcdc"/><path d="M769 138.8H778" stroke="#8a8a8a" stroke-width="0.600"/>
<g transform="translate(748.8 155.4)"><path d="M-4.600 0C-2.600 -3.300 2.600 -3.300 4.600 0C2.600 3.300 -2.600 3.300 -4.600 0Z" fill="#e0e0e0"/><circle cx="0" cy="0" r="1.700" fill="#4c4c4c"/></g>
<path class="ic" d="M761.300 152.4L763.300 155.4L761.300 158.4" style="stroke-width:0.700;stroke:#a0a0a0"/>
<path d="M769 152.0H772.300L773 153.0H778V158.8H769Z" fill="#dcdcdc"/><path d="M769 153.9H778" stroke="#8a8a8a" stroke-width="0.600"/>
<g transform="translate(748.8 173.8)"><path d="M-4.600 0C-2.600 -3.300 2.600 -3.300 4.600 0C2.600 3.300 -2.600 3.300 -4.600 0Z" fill="#e0e0e0"/><circle cx="0" cy="0" r="1.700" fill="#4c4c4c"/></g>
<rect x="761.300" y="165.1" width="20.500" height="16.500" fill="url(#chk)" stroke="#2e2e2e" stroke-width="0.700"/>
<rect x="772.800" y="173.1" width="9" height="8.500" fill="#3c3c3c"/><rect x="775" y="175.4" width="5" height="4.600" fill="none" stroke="#f0f0f0" stroke-width="0.900"/><g fill="#f0f0f0"><rect x="774.200" y="174.6" width="1.600" height="1.600"/><rect x="779.200" y="174.6" width="1.600" height="1.600"/><rect x="774.200" y="179.2" width="1.600" height="1.600"/><rect x="779.200" y="179.2" width="1.600" height="1.600"/></g>
<g transform="translate(748.8 195.0)"><path d="M-4.600 0C-2.600 -3.300 2.600 -3.300 4.600 0C2.600 3.300 -2.600 3.300 -4.600 0Z" fill="#e0e0e0"/><circle cx="0" cy="0" r="1.700" fill="#4c4c4c"/></g>
<rect x="761.300" y="186.9" width="20.500" height="16.500" fill="url(#chk)" stroke="#2e2e2e" stroke-width="0.700"/>
<rect x="772.800" y="194.9" width="9" height="8.500" fill="#3c3c3c"/><rect x="775" y="197.2" width="5" height="4.600" fill="none" stroke="#f0f0f0" stroke-width="0.900"/><g fill="#f0f0f0"><rect x="774.200" y="196.4" width="1.600" height="1.600"/><rect x="779.200" y="196.4" width="1.600" height="1.600"/><rect x="774.200" y="201.0" width="1.600" height="1.600"/><rect x="779.200" y="201.0" width="1.600" height="1.600"/></g>
<path d="M768.500 192.9C767 194.9 767.500 197.9 770 198.9" fill="none" stroke="#333" stroke-width="0.800"/>
<g transform="translate(748.8 216.3)"><path d="M-4.600 0C-2.600 -3.300 2.600 -3.300 4.600 0C2.600 3.300 -2.600 3.300 -4.600 0Z" fill="#e0e0e0"/><circle cx="0" cy="0" r="1.700" fill="#4c4c4c"/></g>
<rect x="761.300" y="207.7" width="20.500" height="16.500" fill="url(#chk)" stroke="#2e2e2e" stroke-width="0.700"/>
<rect x="772.800" y="215.7" width="9" height="8.500" fill="#3c3c3c"/><rect x="775" y="218.0" width="5" height="4.600" fill="none" stroke="#f0f0f0" stroke-width="0.900"/><g fill="#f0f0f0"><rect x="774.200" y="217.2" width="1.600" height="1.600"/><rect x="779.200" y="217.2" width="1.600" height="1.600"/><rect x="774.200" y="221.8" width="1.600" height="1.600"/><rect x="779.200" y="221.8" width="1.600" height="1.600"/></g>
<circle cx="770.800" cy="216.0" r="3.300" fill="#ffd400"/>
<g transform="translate(748.8 274.6)"><path d="M-4.600 0C-2.600 -3.300 2.600 -3.300 4.600 0C2.600 3.300 -2.600 3.300 -4.600 0Z" fill="#e0e0e0"/><circle cx="0" cy="0" r="1.700" fill="#4c4c4c"/></g>
<rect x="761.300" y="266.5" width="20.500" height="16.500" fill="#fff" stroke="#2e2e2e" stroke-width="0.700"/>
<g transform="translate(748.8 295.1)"><path d="M-4.600 0C-2.600 -3.300 2.600 -3.300 4.600 0C2.600 3.300 -2.600 3.300 -4.600 0Z" fill="#e0e0e0"/><circle cx="0" cy="0" r="1.700" fill="#4c4c4c"/></g>
<rect x="761.300" y="287.1" width="20.500" height="16.500" fill="#fff" stroke="#2e2e2e" stroke-width="0.700"/>
<g transform="translate(775.7 233)"><path d="M-4.600 0C-2.600 -3.300 2.600 -3.300 4.600 0C2.600 3.300 -2.600 3.300 -4.600 0Z" fill="#e0e0e0"/><circle cx="0" cy="0" r="1.700" fill="#4c4c4c"/></g>
<g transform="translate(787.3 245.5)"><path d="M-4.600 0C-2.600 -3.300 2.600 -3.300 4.600 0C2.600 3.300 -2.600 3.300 -4.600 0Z" fill="#e0e0e0"/><circle cx="0" cy="0" r="1.700" fill="#4c4c4c"/></g>
<g transform="translate(787.3 257.7)"><path d="M-4.600 0C-2.600 -3.300 2.600 -3.300 4.600 0C2.600 3.300 -2.600 3.300 -4.600 0Z" fill="#e0e0e0"/><circle cx="0" cy="0" r="1.700" fill="#4c4c4c"/></g>
<rect x="882.500" y="205.500" width="6.500" height="21" fill="#454545"/><path class="ic" d="M883.700 217.200L885.800 215L887.900 217.200" style="stroke-width:0.900;stroke:#c8c8c8"/>
<text x="872.500" y="218.800" font-size="8.500" font-style="italic" fill="#e0e0e0" font-family="Liberation Serif, serif">fx</text>
<rect x="871.800" y="295.300" width="6.600" height="5" rx="0.600" fill="none" stroke="#c4c4c4" stroke-width="0.900"/><path class="ic" d="M873.400 295.300V294.200C873.400 292.300 876.800 292.300 876.800 294.200V295.300" style="stroke-width:0.900;stroke:#c4c4c4"/><rect x="874.600" y="297" width="1" height="1.600" fill="#c4c4c4"/>
</svg>
<div class="t" style="left:786.4px;top:120.6px;">小图形</div>
<div class="t" style="left:786.4px;top:135.9px;">嘴巴</div>
<div class="t" style="left:786.4px;top:151.0px;">腮红</div>
<div class="t" style="left:788.2px;top:168.4px;">眼睛</div>
<div class="t" style="left:788.2px;top:189.6px;">小太阳描边</div>
<div class="t" style="left:788.2px;top:210.9px;">小太阳填充</div>
<div class="t" style="left:788.2px;top:269.2px;">背景 拷贝</div>
<div class="t" style="left:789.5px;top:289.7px;font-style:italic">背景</div>
<div class="t" style="left:783.6px;top:227.5px;">效果</div>
<div class="t" style="left:795.5px;top:240px;">内阴影</div>
<div class="t" style="left:795.5px;top:252.2px;">内阴影</div>
<svg style="left:739px;top:464px" width="161" height="16" viewBox="739 464 161 16">
<g class="ic" style="stroke-width:0.900;stroke:#7a7a7a"><rect x="766" y="469.500" width="4.500" height="3" rx="1.500"/><rect x="769.500" y="469.500" width="4.500" height="3" rx="1.500"/></g>
<text x="783.500" y="474.500" font-size="9.500" font-style="italic" fill="#e0e0e0" font-family="Liberation Serif, serif">fx</text><path d="M792 475.500L794 475.500L793 477Z" fill="#d0d0d0"/>
<rect class="icf" x="801" y="467.800" width="8.200" height="6.400" rx="0.500"/><circle cx="805.100" cy="471" r="1.900" fill="#535353"/>
<circle class="ic" cx="823.200" cy="471" r="3.300" style="stroke-width:1"/><path class="icf" d="M820.900 473.400A3.300 3.300 0 0 0 825.500 468.600Z"/><path d="M827.200 475.500L829.200 475.500L828.200 477Z" fill="#d0d0d0"/>
<path class="icf" d="M837.300 467.800H840.300L841 468.800H845.500V474.300H837.300Z"/>
<rect class="ic" x="855.500" y="468" width="6.500" height="6" style="stroke-width:1"/><path d="M855.500 471.500H858.500V474" fill="none" stroke="#d4d4d4" stroke-width="0.900"/>
<path class="icf" d="M873.300 469.200H879.700V470.200H873.300ZM873.900 470.800H879.100L878.600 475.200H874.400ZM875.500 468.200H877.500V469.200H875.500Z"/>
</svg>
<div class="abs" style="left:531px;top:464px;width:119.600px;height:15.800px;background:#fbfcfe;border:1px solid #dfe6ee"></div>
<div class="abs" style="left:529.800px;top:462.300px;width:17.600px;height:15.600px;background:#f24a1a;border-radius:3px;transform:rotate(-11deg)"></div>
<div class="t" style="left:533.300px;top:463.200px;height:14px;line-height:14px;font-size:15.500px;font-weight:bold;color:#fff;font-family:'Liberation Sans',sans-serif;transform:rotate(-11deg) skewX(-8deg);-webkit-text-stroke:0">S</div>
<div class="t" style="left:550px;top:465.500px;font-size:10px;font-weight:bold;color:#2b7fd9">英</div>
<svg style="left:564px;top:464px" width="86" height="16" viewBox="564 464 86 16"><g fill="#2b7fd9"><path d="M572.200 467.800C575 468.500 576.300 472 574.300 474.300C572.300 476.500 568.600 476 567.200 474C570.200 474.600 573 472.500 572.200 467.800Z"/><circle cx="583.200" cy="469.800" r="1"/><path d="M586.500 471.500C587.500 472 587.300 474 585.500 475V474C586.200 473.500 586.300 472.800 585.700 472.500Z"/><rect x="595" y="467.500" width="11.500" height="8" rx="1.200"/><circle cx="614.500" cy="469.500" r="2.200"/><path d="M610.500 476.500C610.500 472.500 618.500 472.500 618.500 476.500Z"/><rect x="616.500" y="471.500" width="4.500" height="3.600" rx="0.600"/><path d="M626.500 467.500L629 466.800C629.800 468 631.200 468 632 466.800L634.500 467.500L636 470L634.300 471V476.500H626.700V471L625 470Z"/><path d="M646.500 466.500C644.500 466 642.500 468 643.300 470L639.500 474.500C639 475.300 640.200 476.500 641 475.800L645 471.700C647 472.500 649 470.500 648.500 468.500L646.800 470.200L645 468.500Z"/></g><g fill="#fbfcfe"><rect x="596.500" y="469" width="1.400" height="1.200"/><rect x="598.800" y="469" width="1.400" height="1.200"/><rect x="601.100" y="469" width="1.400" height="1.200"/><rect x="603.400" y="469" width="1.400" height="1.200"/><rect x="596.500" y="471" width="1.400" height="1.200"/><rect x="598.800" y="471" width="1.400" height="1.200"/><rect x="601.100" y="471" width="1.400" height="1.200"/><rect x="603.400" y="471" width="1.400" height="1.200"/><rect x="598" y="473.200" width="5.500" height="1.200"/></g></svg>
<div class="abs" style="left:264px;top:480px;width:300px;height:26px;background:linear-gradient(90deg,#1a1412 0,#1c1614 25%,#130e0d 60%,#060606 100%);clip-path:polygon(0 0,100% 0,100% 100%,14px 100%)"></div>
<div class="abs" style="left:97px;top:480px;width:31.500px;height:26px;background:#2a2a2a"></div>
<div class="abs" style="left:67px;top:504.300px;width:27px;height:1.700px;background:#f2b8c4"></div>
<div class="abs" style="left:97px;top:504.300px;width:31.5px;height:1.700px;background:#f2b8c4"></div>
<div class="abs" style="left:229px;top:504.300px;width:27px;height:1.700px;background:#f2b8c4"></div>
<svg style="left:0;top:480px" width="900" height="26" viewBox="0 480 900 26">
<path d="M10 488.600L14.600 488V492.500H10ZM15.400 487.900L21.300 487.100V492.500H15.400ZM10 493.300H14.600V497.800L10 497.200ZM15.400 493.300H21.300V498.700L15.400 497.900Z" fill="#fff"/>
<circle cx="49.800" cy="490.500" r="3.700" fill="none" stroke="#fff" stroke-width="1.200"/><path d="M47.200 493.300L42.700 498" stroke="#fff" stroke-width="1.300" stroke-linecap="round"/>
<circle cx="80.6" cy="488.8" r="4.300" fill="#e53935" opacity="0.920"/>
<circle cx="84.1" cy="490.8" r="4.300" fill="#fb8c00" opacity="0.920"/>
<circle cx="84.1" cy="494.8" r="4.300" fill="#fdd835" opacity="0.920"/>
<circle cx="80.6" cy="496.8" r="4.300" fill="#43a047" opacity="0.920"/>
<circle cx="77.1" cy="494.8" r="4.300" fill="#1e88e5" opacity="0.920"/>
<circle cx="77.1" cy="490.8" r="4.300" fill="#8e24aa" opacity="0.920"/>
<circle cx="80.6" cy="492.8" r="1.500" fill="#fff"/>
<rect x="105.5" y="486" width="14.500" height="13.500" fill="#0a1e33" stroke="#3fb0f5" stroke-width="1.100"/><text x="112.75" y="496.300" text-anchor="middle" font-size="8.500" font-weight="bold" fill="#3fb0f5" font-family="Liberation Sans, sans-serif">Ps</text>
<rect x="138" y="486" width="14.500" height="13.500" fill="#2a1300" stroke="#ff8a1c" stroke-width="1.100"/><text x="145.25" y="496.300" text-anchor="middle" font-size="8.500" font-weight="bold" fill="#ff8a1c" font-family="Liberation Sans, sans-serif">Ai</text>
<rect x="170" y="486" width="14.500" height="13.500" fill="#1c0a33" stroke="#c495ff" stroke-width="1.100"/><text x="177.25" y="496.300" text-anchor="middle" font-size="8.500" font-weight="bold" fill="#c495ff" font-family="Liberation Sans, sans-serif">Ae</text>
<ellipse cx="209" cy="490" rx="7.500" ry="5" fill="#e8e8ee"/><ellipse cx="207" cy="489.500" rx="4" ry="2.600" fill="#e3473c"/><path d="M210 492L214 499M214.500 491.500L209 499.500" stroke="#3aa0e8" stroke-width="1.500" stroke-linecap="round"/><circle cx="213.800" cy="499.800" r="1.300" fill="none" stroke="#c8c8c8" stroke-width="0.800"/>
<path d="M234 487H240L241.500 488.500H250V499H234Z" fill="#f7c64a"/><rect x="234" y="490.500" width="16" height="8.500" fill="#fbdc7a"/><rect x="237.500" y="494.500" width="9" height="4.500" fill="#3aa0e8"/>
<path d="M734.300 494.300L737.800 490.800L741.300 494.300" fill="none" stroke="#fff" stroke-width="1.100"/>
<rect x="751.300" y="491" width="8" height="4.600" fill="#fff"/><rect x="750" y="492.300" width="1.300" height="2" fill="#fff"/><path d="M748.500 490.500C749.500 489.500 750.500 490 751 491M748.500 489.500V491.500" stroke="#fff" stroke-width="0.900" fill="none"/><rect x="752.300" y="492" width="3" height="2.600" fill="#060606" opacity="0.550"/>
<g fill="none" stroke="#fff" stroke-width="0.900"><path d="M772.300 497.800L774 497.800L774 496.100" stroke-width="1.600"/><path d="M770.200 497.800A3.800 3.800 0 0 1 774 494" opacity="0.900"/><path d="M768 497.800A6 6 0 0 1 774 491.800" opacity="0.750"/><path d="M765.800 497.800A8.200 8.200 0 0 1 774 489.600" opacity="0.600"/></g>
<path d="M780.300 492.500H781.800L784 490.300V497.700L781.800 495.500H780.300Z" fill="none" stroke="#fff" stroke-width="0.800"/><path d="M785.300 492A3 3 0 0 1 785.300 496M786.800 490.500A5 5 0 0 1 786.800 497.500" fill="none" stroke="#fff" stroke-width="0.800"/>
<rect x="796.500" y="489" width="8.500" height="8.500" fill="none" stroke="#fff" stroke-width="1"/><path d="M798.300 491.500H803.200M798.300 493.500H803.200" stroke="#fff" stroke-width="0.800"/><circle cx="804.500" cy="497" r="2.600" fill="#060606" stroke="#fff" stroke-width="0.900"/>
<rect x="829" y="488" width="11.500" height="10.500" rx="2.200" fill="#f4511e"/><text x="831.300" y="497" font-size="10" font-weight="bold" font-style="italic" fill="#fff" font-family="Liberation Sans, sans-serif">S</text>
<path d="M896.500 480V506" stroke="#555" stroke-width="1"/>
</svg>
<div class="t" style="left:812.800px;top:487.300px;font-size:9px;font-weight:bold;color:#fff;-webkit-text-stroke:0">中</div>
<div class="t" style="left:862px;top:480.800px;font-size:8.900px;-webkit-text-stroke:0;color:#fff;font-family:'Liberation Sans',sans-serif">12:06</div>
<div class="t" style="left:852.500px;top:491.600px;font-size:9.100px;-webkit-text-stroke:0;color:#fff;font-family:'Liberation Sans',sans-serif">2016/5/11</div>
</body>
</html>
